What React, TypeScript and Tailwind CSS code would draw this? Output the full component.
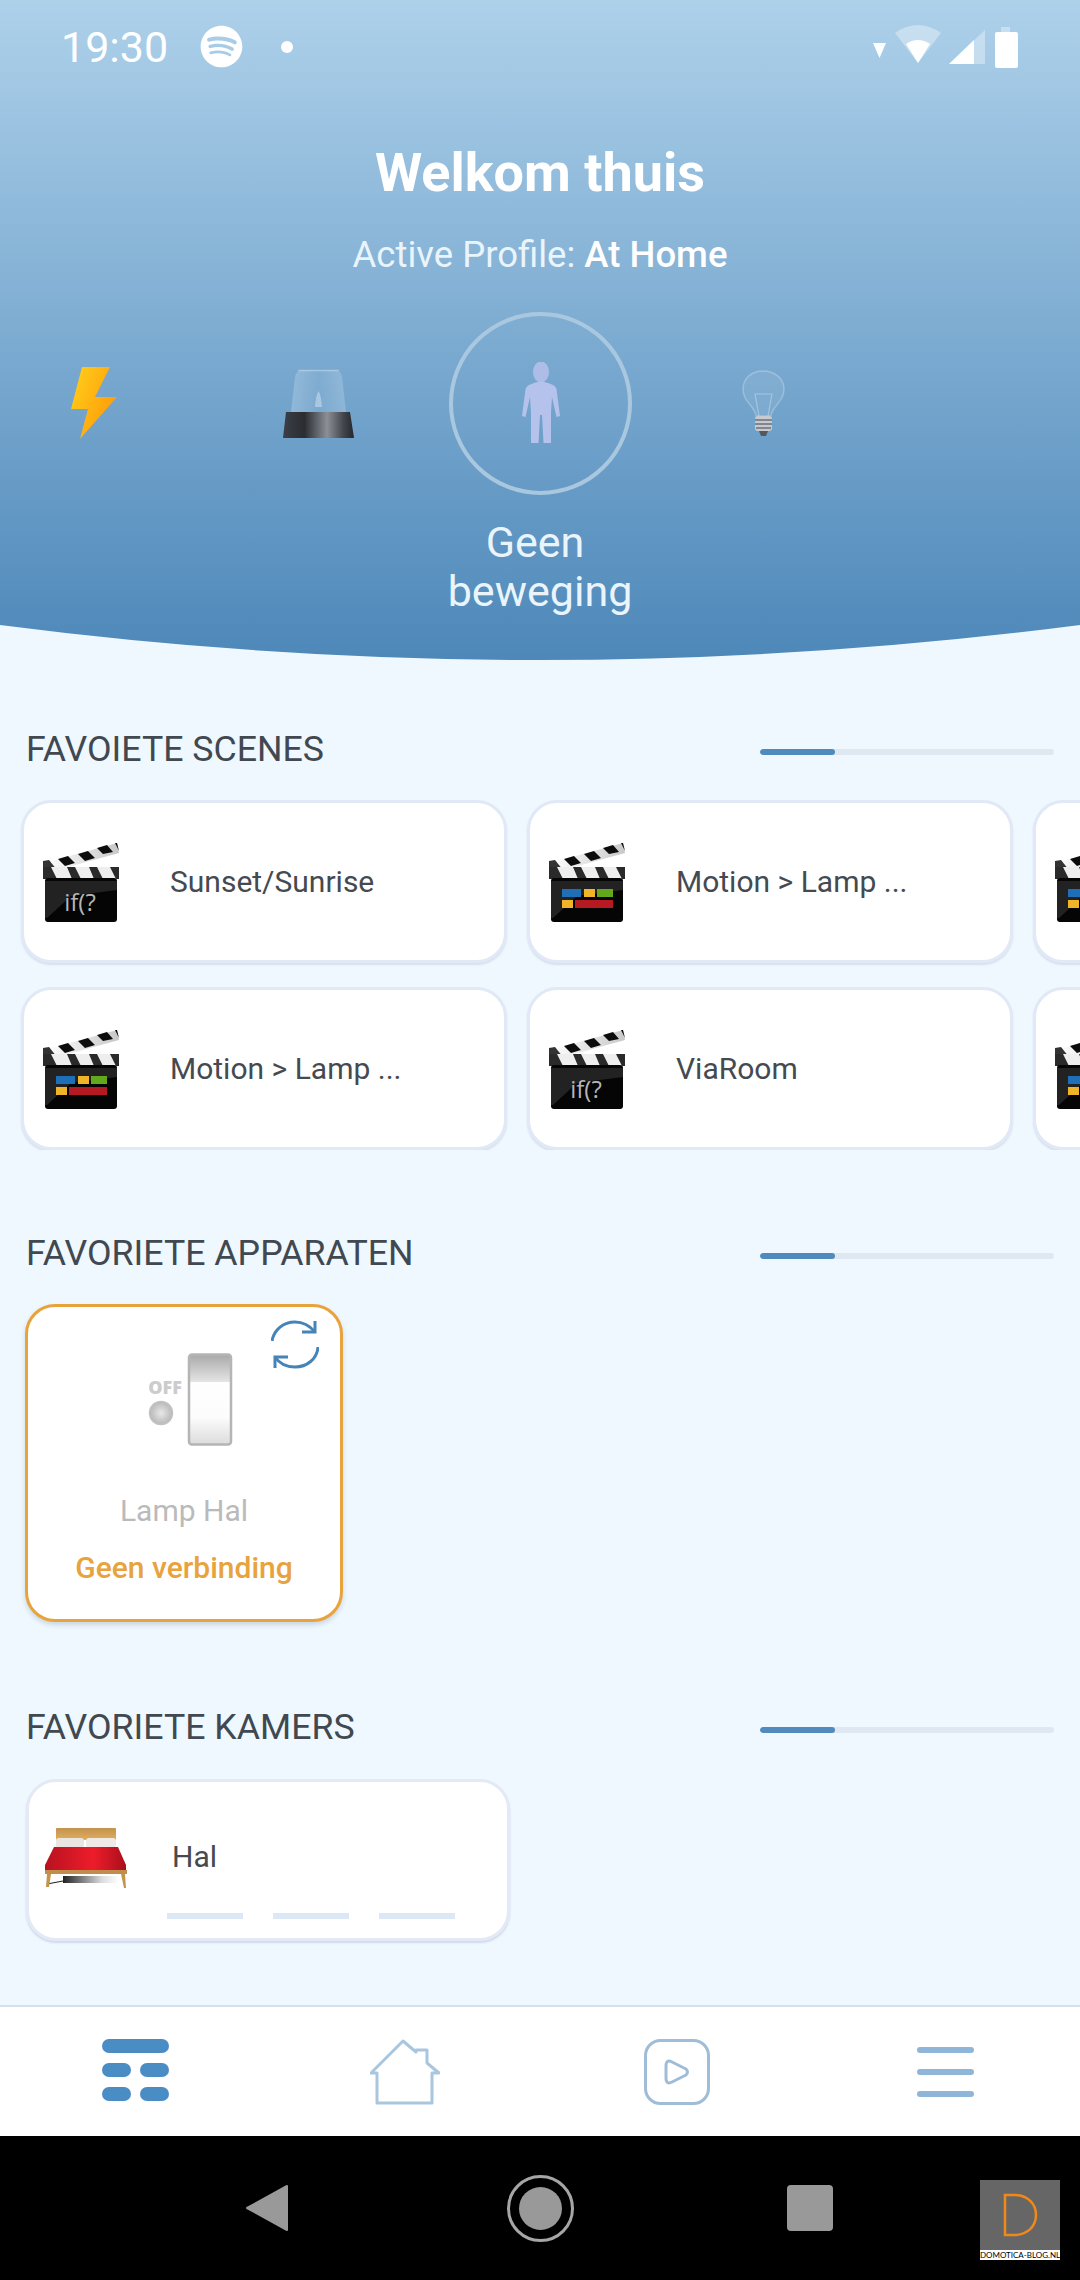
import React from "react";
import { FaSpotify } from "react-icons/fa";

function Clapper({ kind }: { kind: "if" | "color" }) {
  return (
    <svg width="76" height="80" viewBox="0 0 76 80" className="shrink-0">
      <defs>
        <linearGradient id="stripe" x1="0" y1="0" x2="1" y2="0">
          <stop offset="0" stopColor="#ffffff" />
          <stop offset="1" stopColor="#c8c8c8" />
        </linearGradient>
      </defs>
      <path d="M1 21L74 1L76 11L7 30Z" fill="url(#stripe)" />
      <path d="M15 17L25 14L32 21L22 24ZM35 12L45 9L52 16L42 19ZM54 6L64 3L70 10L60 12ZM72 1L74 1L76 9Z" fill="#0c0c0c" />
      <path d="M0 19L6 18L14 28H0Z" fill="#333" />
      <rect x="0" y="25" width="76" height="12" fill="#eee" />
      <path d="M0 25H8L14 37H0ZM24 25H32L38 37H29ZM46 25H54L60 37H51ZM67 25H76V37H73Z" fill="#2a2a2a" />
      <rect x="2" y="36" width="72" height="44" rx="3" fill="#050505" />
      <path d="M2 39H74V48L28 54L4 76H2Z" fill="#222" />
      {kind === "if" ? (
        <text x="37" y="69" textAnchor="middle" fontSize="24" fontFamily="'Open Sans', sans-serif" fill="#b5b5b5">if(?</text>
      ) : (
        <g>
          <rect x="13" y="47" width="19" height="8" fill="#1f6fb8" />
          <rect x="35" y="47" width="11" height="8" fill="#f0b428" />
          <rect x="48" y="47" width="16" height="8" fill="#62a81c" />
          <rect x="13" y="58" width="11" height="8" fill="#f0b428" />
          <rect x="26" y="58" width="38" height="8" fill="#b51a22" />
        </g>
      )}
    </svg>
  );
}

function SceneCard({ label, kind }: { label?: string; kind: "if" | "color" }) {
  return (
    <div className="w-[486px] h-[163px] shrink-0 flex items-center pl-[19px] gap-[51px] bg-white rounded-[30px] border-[3px] border-[#e1e9f6] shadow-[0_2px_2px_#d6e0ee]">
      <Clapper kind={kind} />
      {label ? <span className="text-[30px] text-[#454a50] leading-none">{label}</span> : null}
    </div>
  );
}

function SectionHead({ title }: { title: string }) {
  return (
    <div className="h-[44px] flex items-center justify-between pr-[26px] pl-[26px]">
      <span className="mt-[2px] text-[35.7px] text-[#414850] leading-none">{title}</span>
      <div className="mt-[5px] w-[294px] h-[6px] rounded-full bg-[#dfe8f1] overflow-hidden">
        <div className="w-[75px] h-full rounded-full bg-[#4f8bbd]" />
      </div>
    </div>
  );
}

function Lightning() {
  return (
    <svg width="47" height="72" viewBox="0 0 47 72" className="shrink-0">
      <defs>
        <linearGradient id="bolt" x1="0" y1="0" x2="1" y2="0.6">
          <stop offset="0" stopColor="#ffd21c" />
          <stop offset="1" stopColor="#ff9a08" />
        </linearGradient>
      </defs>
      <path d="M12 0H40L25 30H47L10 72L18 42H1Z" fill="url(#bolt)" />
    </svg>
  );
}

function Siren() {
  return (
    <svg width="71" height="69" viewBox="0 0 71 69" className="shrink-0">
      <defs>
        <linearGradient id="sirenBase" x1="0" y1="0" x2="1" y2="0">
          <stop offset="0" stopColor="#3c3f46" />
          <stop offset="0.3" stopColor="#2a2c32" />
          <stop offset="0.62" stopColor="#8d8f98" />
          <stop offset="0.85" stopColor="#44464d" />
          <stop offset="1" stopColor="#24262b" />
        </linearGradient>
        <linearGradient id="dome" x1="0" y1="0" x2="1" y2="0">
          <stop offset="0" stopColor="#ffffff" stopOpacity="0.22" />
          <stop offset="0.5" stopColor="#ffffff" stopOpacity="0.06" />
          <stop offset="1" stopColor="#ffffff" stopOpacity="0.2" />
        </linearGradient>
      </defs>
      <path d="M8 43L12 8Q13 1 20 1H51Q58 1 59 8L63 43Z" fill="url(#dome)" />
      <path d="M15 1.500H56" stroke="#ffffff" strokeOpacity="0.3" strokeWidth="1.500" />
      <path d="M32 38Q33 26 35.500 22Q38 26 39 38Z" fill="#ffffff" fillOpacity="0.35" />
      <path d="M3 43H67L71 69H0Z" fill="url(#sirenBase)" />
    </svg>
  );
}

function Person() {
  return (
    <svg width="40" height="82" viewBox="0 0 40 82">
      <ellipse cx="20" cy="10" rx="8" ry="10.500" fill="#aebde8" />
      <path d="M13 21Q20 18 27 21L32 23Q36 25 36 31L39 54L35.500 55L31 35L30 50V81H22.500L21 53H19L17.500 81H10V50L9 35L4.500 55L1 54L4 31Q4 25 8 23Z" fill="#b4c2ec" />
    </svg>
  );
}

function Bulb() {
  return (
    <svg width="45" height="66" viewBox="0 0 45 66" className="shrink-0">
      <path d="M15 46C14 36 2 32 2 19C2 8 11 1 22 1C33 1 43 8 43 19C43 32 31 36 30 46Z" fill="#ffffff" fillOpacity="0.08" stroke="#ffffff" strokeOpacity="0.25" strokeWidth="1.500" />
      <path d="M18 46L14 24H31L27 46" fill="none" stroke="#ffffff" strokeOpacity="0.3" strokeWidth="1.200" />
      <rect x="14" y="46" width="17" height="15" rx="3" fill="#c7cace" />
      <path d="M14 50H31M14 54H31M15 58H30" stroke="#6d7278" strokeWidth="1.500" />
      <path d="M18 61H27L25 66H20Z" fill="#55595e" />
    </svg>
  );
}

function Rocker() {
  return (
    <svg width="100" height="93" viewBox="0 0 100 93">
      <defs>
        <linearGradient id="rock" x1="0" y1="0" x2="0" y2="1">
          <stop offset="0" stopColor="#a9a9a9" />
          <stop offset="0.3" stopColor="#e4e4e4" />
          <stop offset="0.31" stopColor="#ffffff" />
          <stop offset="0.7" stopColor="#fcfcfc" />
          <stop offset="1" stopColor="#dcdcdc" />
        </linearGradient>
        <radialGradient id="led" cx="0.5" cy="0.5" r="0.55">
          <stop offset="0" stopColor="#e8e8e8" />
          <stop offset="1" stopColor="#b3b3b3" />
        </radialGradient>
      </defs>
      <text x="19" y="41" textAnchor="middle" fontSize="18" fontWeight="800" fontFamily="'Open Sans', sans-serif" fill="#cccccc">OFF</text>
      <circle cx="15" cy="60" r="11.500" fill="url(#led)" stroke="#c2c2c2" strokeWidth="1.500" />
      <rect x="43" y="1.500" width="42" height="90" rx="3" fill="url(#rock)" stroke="#b5b5b5" strokeWidth="2.500" />
    </svg>
  );
}

function Sync() {
  return (
    <svg width="48" height="50" viewBox="0 0 48 50" fill="none" stroke="#4584b8" strokeWidth="3">
      <path d="M1 21C3 10 12 2 24 2C33 2 39 6 44 12" />
      <path d="M44 1V12H31" />
      <path d="M47 27C46 39 36 47 24 47C15 47 8 43 4 37" />
      <path d="M4 48V37H17" />
    </svg>
  );
}

function Bed() {
  return (
    <svg width="82" height="60" viewBox="0 0 82 60" className="shrink-0">
      <defs>
        <linearGradient id="wood" x1="0" y1="0" x2="0" y2="1">
          <stop offset="0" stopColor="#c2924f" />
          <stop offset="1" stopColor="#e2ad5e" />
        </linearGradient>
        <linearGradient id="red" x1="0" y1="0" x2="1" y2="0">
          <stop offset="0" stopColor="#b81220" />
          <stop offset="0.6" stopColor="#ee1c2a" />
          <stop offset="1" stopColor="#a90f1c" />
        </linearGradient>
        <linearGradient id="under" x1="0" y1="0" x2="1" y2="0">
          <stop offset="0" stopColor="#222" />
          <stop offset="0.7" stopColor="#ddd" />
          <stop offset="1" stopColor="#fff" />
        </linearGradient>
      </defs>
      <rect x="11" y="0" width="60" height="12" rx="1" fill="url(#wood)" />
      <rect x="11" y="10" width="28" height="10" rx="3" fill="#e9e6e2" />
      <rect x="41" y="10" width="30" height="10" rx="3" fill="#eeeae6" />
      <rect x="18" y="48" width="56" height="7" fill="url(#under)" />
      <path d="M2 56L18 53" stroke="#222" strokeWidth="1.200" />
      <path d="M9 19H73L81 37V43H0V37Z" fill="url(#red)" />
      <rect x="0" y="42" width="82" height="4" fill="#c18d4c" />
      <path d="M2 46L1 59H4L6 46ZM76 46L79 60H81L80 46Z" fill="#c59350" />
    </svg>
  );
}

function StatusRight() {
  return (
    <div className="flex items-center text-white">
      <svg width="146" height="44" viewBox="0 0 146 44">
        <path d="M0 18H13L6.500 33Z" fill="#fff" />
        <path d="M22 8Q45 -8 68 8L45 38Z" fill="#fff" fillOpacity="0.35" />
        <path d="M33 19Q45 11 57 19L45 38Z" fill="#fff" />
        <path d="M76 39L112 5V39Z" fill="#fff" fillOpacity="0.35" />
        <path d="M76 39L101 15V39Z" fill="#fff" />
        <rect x="128" y="2" width="9" height="6" fill="#fff" fillOpacity="0.35" />
        <rect x="122" y="7" width="23" height="36" rx="2" fill="#fff" />
      </svg>
    </div>
  );
}

function GridIcon() {
  return (
    <div className="w-[67px] flex flex-col gap-[10px]">
      <div className="h-[14px] rounded-full bg-[#4a8cc4]" />
      <div className="flex justify-between">
        <div className="w-[29px] h-[14px] rounded-full bg-[#4a8cc4]" />
        <div className="w-[29px] h-[14px] rounded-full bg-[#4a8cc4]" />
      </div>
      <div className="flex justify-between">
        <div className="w-[29px] h-[14px] rounded-full bg-[#4a8cc4]" />
        <div className="w-[29px] h-[14px] rounded-full bg-[#4a8cc4]" />
      </div>
    </div>
  );
}

function HouseIcon() {
  return (
    <svg width="70" height="66" viewBox="0 0 70 66" fill="none" stroke="#a9c6df" strokeWidth="3">
      <path d="M7 64V34H1L33 2L46 13V11H57V24L69 34H62V64Z" strokeLinejoin="round" />
    </svg>
  );
}

function PlayIcon() {
  return (
    <svg width="66" height="66" viewBox="0 0 66 66" fill="none" stroke="#9fbdd6" strokeWidth="3">
      <rect x="1.500" y="1.500" width="63" height="63" rx="15" />
      <path d="M22 27Q22 20 28 23L42 30Q45 33 42 36L28 43Q22 46 22 39Z" strokeLinejoin="round" />
    </svg>
  );
}

export default function App() {
  return (
    <div className="w-[1080px] h-[2280px] flex flex-col overflow-hidden bg-[#eff8ff] font-['Roboto',sans-serif]">
      <header className="h-[660px] shrink-0 flex flex-col bg-gradient-to-b from-[#aed1ea] to-[#4d88b9] [clip-path:path('M0_0H1080V625Q540_695_0_625Z')]">
        <div className="h-[94px] shrink-0 flex items-center justify-between pl-[61px] pr-[61px]">
          <div className="flex items-center text-white">
            <span className="text-[43px] leading-none w-[139px]">19:30</span>
            <FaSpotify className="w-[43px] h-[43px] mb-[2px]" />
            <div className="ml-[38px] w-[12px] h-[12px] rounded-full bg-white" />
          </div>
          <StatusRight />
        </div>
        <h1 className="mt-[49px] h-[60px] flex items-center justify-center text-[54px] font-bold text-white leading-none">Welkom thuis</h1>
        <p className="mt-[30px] h-[44px] flex items-center justify-center text-[36.500px] font-normal text-[#eaf4fb] leading-none whitespace-pre">
          Active Profile: <span className="font-medium text-white">At Home</span>
        </p>
        <div className="mt-[35px] h-[182px] flex items-center pl-[70px]">
          <Lightning />
          <div className="ml-[166px]"><Siren /></div>
          <div className="ml-[95px] w-[183px] h-[183px] shrink-0 rounded-full border-[4px] border-[#a9c8e0] flex items-center justify-center">
            <Person />
          </div>
          <div className="ml-[109px]"><Bulb /></div>
        </div>
        <div className="mt-[24px] flex flex-col items-center text-[43px] font-normal text-[#eaf4fb] leading-[49px]">
          <span className="pr-[10px]">Geen</span>
          <span>beweging</span>
        </div>
      </header>

      <main className="flex-1 min-h-0">
        <div className="mt-[67px]"><SectionHead title="FAVOIETE SCENES" /></div>
        <div className="mt-[29px] flex flex-col gap-[24px] pl-[21px] overflow-hidden">
          <div className="flex gap-[20px]">
            <SceneCard label="Sunset/Sunrise" kind="if" />
            <SceneCard label="Motion > Lamp ..." kind="color" />
            <SceneCard kind="color" />
          </div>
          <div className="flex gap-[20px]">
            <SceneCard label="Motion > Lamp ..." kind="color" />
            <SceneCard label="ViaRoom" kind="if" />
            <SceneCard kind="color" />
          </div>
        </div>

        <div className="mt-[81px]"><SectionHead title="FAVORIETE APPARATEN" /></div>
        <div className="mt-[29px] ml-[25px] relative w-[318px] h-[318px] rounded-[30px] bg-white border-[3px] border-[#e8a33d] shadow-[0_3px_5px_#c9d6e2] flex flex-col items-center">
          <div className="absolute right-[21px] top-[13px]"><Sync /></div>
          <div className="mt-[46px] pl-[24px]"><Rocker /></div>
          <span className="mt-[45px] text-[30px] text-[#bababa] leading-[40px]">Lamp Hal</span>
          <span className="mt-[17px] text-[30px] font-medium text-[#e8a33d] leading-[40px]">Geen verbinding</span>
        </div>

        <div className="mt-[83px]"><SectionHead title="FAVORIETE KAMERS" /></div>
        <div className="mt-[30px] ml-[26px] relative w-[484px] h-[162px] rounded-[30px] bg-white border-[3px] border-[#e4e9f6] shadow-[0_2px_2px_#d0d9ea] flex items-center pl-[16px] pb-[4px]">
          <Bed />
          <span className="ml-[45px] mb-[3px] text-[30px] text-[#454a50] leading-none">Hal</span>
          <div className="absolute left-[138px] top-[131px] flex gap-[30px]">
            <div className="w-[76px] h-[6px] bg-[#dde8f6]" />
            <div className="w-[76px] h-[6px] bg-[#dde8f6]" />
            <div className="w-[76px] h-[6px] bg-[#dde8f6]" />
          </div>
        </div>
      </main>

      <nav className="h-[131px] shrink-0 bg-white border-t-[2px] border-[#d5e0ea] grid grid-cols-4 items-center">
        <div className="flex justify-center pb-[4px]"><GridIcon /></div>
        <div className="flex justify-center"><HouseIcon /></div>
        <div className="flex justify-center pl-[3px]"><PlayIcon /></div>
        <div className="flex flex-col items-center gap-[16px]">
          <div className="w-[57px] h-[6px] rounded-full bg-[#8fb5d8]" />
          <div className="w-[57px] h-[6px] rounded-full bg-[#8fb5d8]" />
          <div className="w-[57px] h-[6px] rounded-full bg-[#8fb5d8]" />
        </div>
      </nav>

      <div className="relative h-[144px] shrink-0 bg-black flex items-center pl-[246px]">
        <svg width="42" height="48" viewBox="0 0 42 48"><path d="M41 2V46L1 24Z" fill="#999" stroke="#999" strokeWidth="2" strokeLinejoin="round" /></svg>
        <div className="ml-[219px] w-[67px] h-[67px] rounded-full border-[3px] border-[#a6a6a6] flex items-center justify-center">
          <div className="w-[43px] h-[43px] rounded-full bg-[#999]" />
        </div>
        <div className="ml-[213px] w-[46px] h-[46px] rounded-[4px] bg-[#999]" />
        <div className="absolute left-[980px] top-[44px] w-[80px] h-[80px] bg-[#666] flex flex-col">
          <div className="flex-1 flex items-center justify-center">
            <svg width="36" height="44" viewBox="0 0 36 44" fill="none" stroke="#f0891a" strokeWidth="2.500"><path d="M3 2V42H12C26 42 34 33 34 22C34 11 26 2 12 2Z" /></svg>
          </div>
          <div className="h-[10px] bg-white text-[8px] leading-[10px] text-black text-center whitespace-nowrap font-['Lato',sans-serif]">DOMOTICA-BLOG.NL</div>
        </div>
      </div>
    </div>
  );
}
